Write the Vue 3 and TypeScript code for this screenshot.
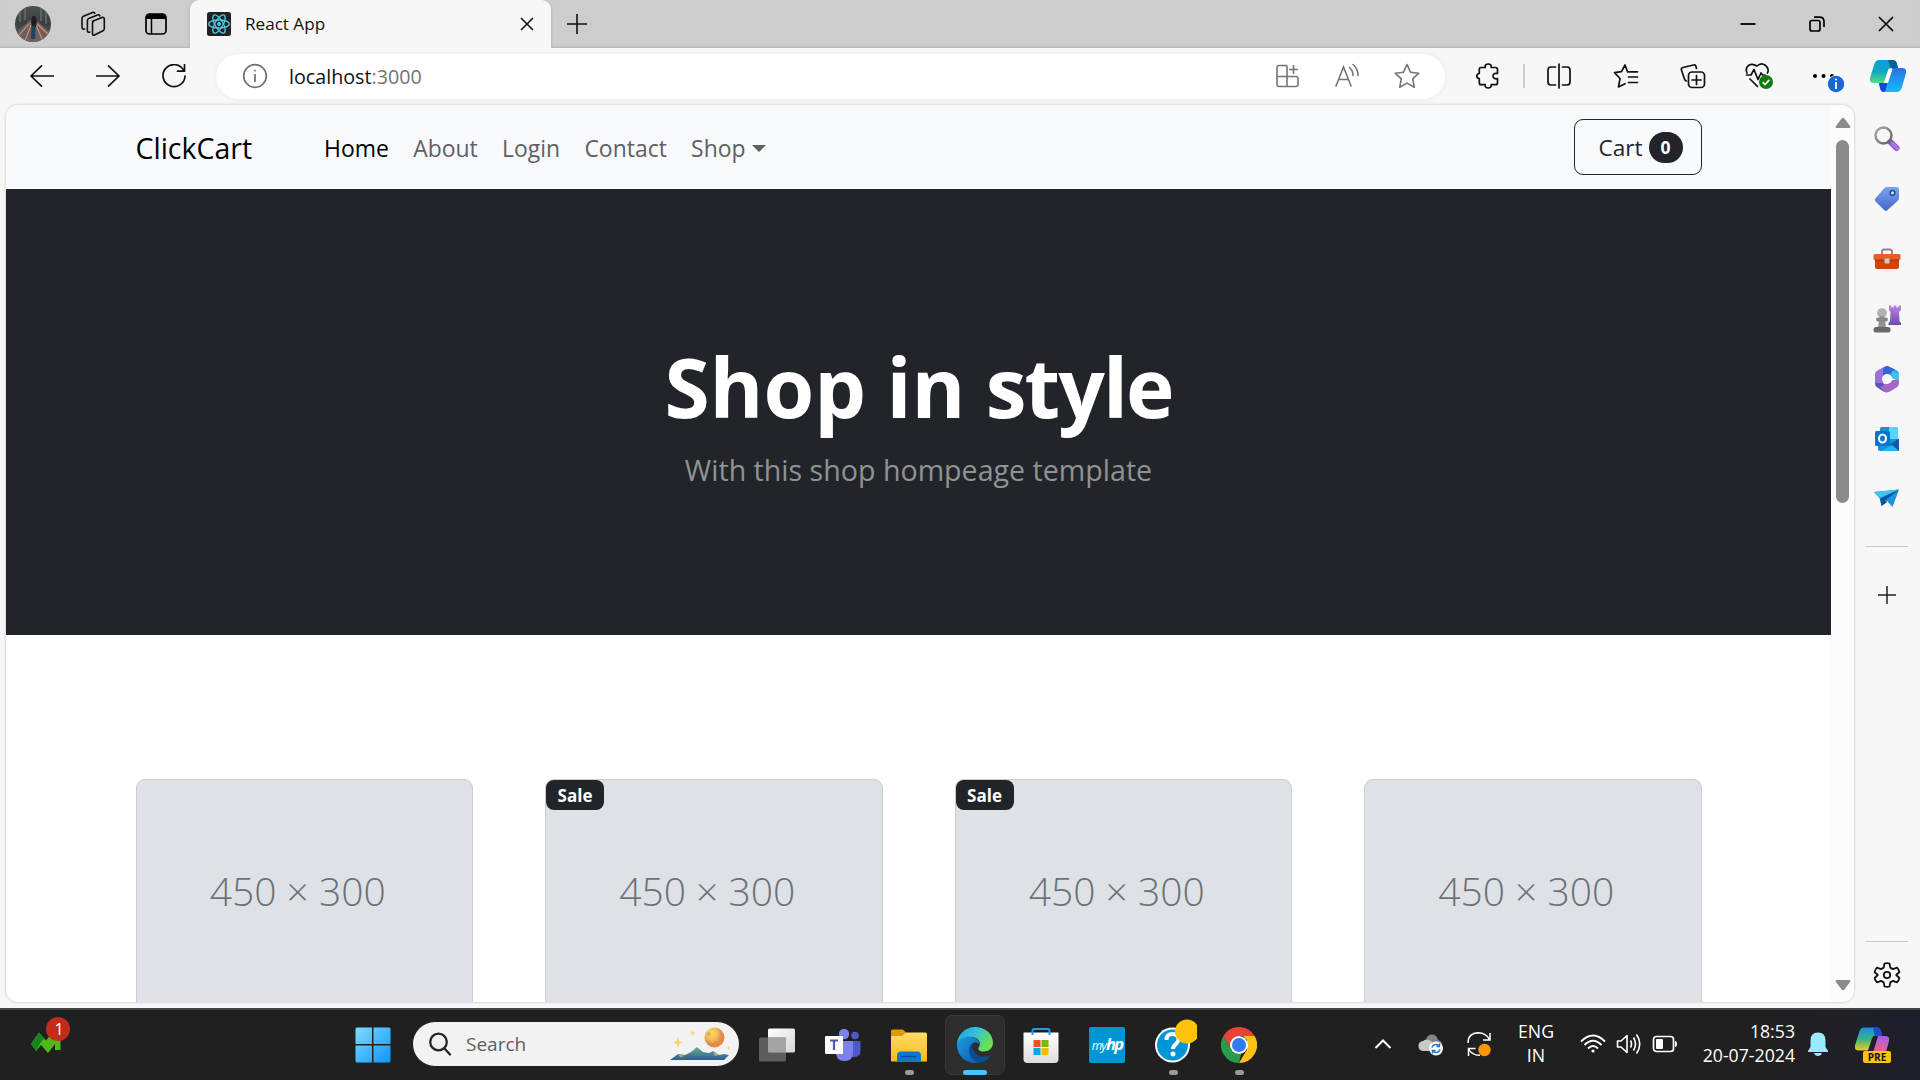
<script setup lang="ts">
interface Product {
  id: number
  sale: boolean
}

const links: string[] = ['Home', 'About', 'Login', 'Contact']
const products: Product[] = [
  { id: 1, sale: false },
  { id: 2, sale: true },
  { id: 3, sale: true },
  { id: 4, sale: false },
]
</script>

<template>
  <div class="screen">
    <header class="tabstrip">
      <svg class="avatar" width="36" height="36" viewBox="0 0 36 36">
        <defs>
          <clipPath id="avatarClip"><circle cx="18" cy="18" r="18" /></clipPath>
          <linearGradient id="forest" x1="0" y1="0" x2="0" y2="1">
            <stop offset="0" stop-color="#4c5152" /><stop offset=".5" stop-color="#3a3f40" /><stop offset="1" stop-color="#6d6562" />
          </linearGradient>
        </defs>
        <g clip-path="url(#avatarClip)">
          <rect width="36" height="36" fill="url(#forest)" />
          <path d="M5 0v16M10 0v14M26 0v15M31 0v18" stroke="#666b6c" stroke-width="1.5" />
          <path d="M15 14 0 28v8h36v-9L21 14z" fill="#6b605c" />
          <path d="M15 17 3 30M16 19 10 35M20 16l14 13M21 19l7 16" stroke="#d8907a" stroke-width="1.1" />
          <path d="M16 14l2-4h2l2 5-1 6h-4z" fill="#1d1e24" />
          <path d="M16.500 20h4l-.5 13h-4z" fill="#1c4260" />
        </g>
      </svg>
      <svg class="workspaces" width="26" height="26" viewBox="0 0 26 26" fill="none" stroke="#111" stroke-width="1.6" stroke-linejoin="round" stroke-linecap="round">
        <path d="M12.500 10.200 22 6.500q2.300-.6 2.300 1.500v9.500q0 1.500-1.300 2.200L14.500 24q-2 .8-2-1.500V12.400q0-1.600 1-2.200z" />
        <path d="M9.800 21q-2.400.8-2.400-1.600V9.800q0-1.700 1.400-2.400L17.500 4q2-.5 2.300 1" />
        <path d="M4.600 18q-2.600.5-2.600-1.700V7.600q0-1.700 1.400-2.300L12.500 1.500q2-.5 2.300.8" />
      </svg>
      <svg class="tabaction" width="22" height="22" viewBox="0 0 22 22">
        <rect x="1" y="1" width="20" height="20" rx="3.500" fill="none" stroke="#000" stroke-width="1.700" />
        <path d="M1 6V4q0-3 3-3h14q3 0 3 3v2z" /><path d="M6.500 6v15" stroke="#000" stroke-width="1.500" />
      </svg>
      <div class="tab">
        <svg width="24" height="24" viewBox="0 0 24 24">
          <rect width="24" height="24" rx="2.500" fill="#222" />
          <g fill="none" stroke="#4cc9ea" stroke-width="1.300">
            <ellipse cx="12" cy="12" rx="10.300" ry="4" />
            <ellipse cx="12" cy="12" rx="10.300" ry="4" transform="rotate(60 12 12)" />
            <ellipse cx="12" cy="12" rx="10.300" ry="4" transform="rotate(120 12 12)" />
          </g>
          <circle cx="12" cy="12" r="2" fill="#4cc9ea" />
        </svg>
        <span class="tab-title">React App</span>
        <svg width="14" height="14" viewBox="0 0 14 14"><path d="M1 1l12 12M13 1 1 13" stroke="#111" stroke-width="1.600" /></svg>
      </div>
      <svg class="newtab" width="22" height="22" viewBox="0 0 22 22"><path d="M11 1v20M1 11h20" stroke="#111" stroke-width="1.600" /></svg>
      <div class="window-controls">
        <svg width="16" height="16" viewBox="0 0 16 16"><path d="M.5 8h15" stroke="#000" stroke-width="1.800" /></svg>
        <svg width="16" height="16" viewBox="0 0 16 16" fill="none" stroke="#000" stroke-width="1.700">
          <rect x="1" y="4.500" width="10" height="10.500" rx="2" /><path d="M5 1.200h5.500q4.500 0 4.500 4.500V11" />
        </svg>
        <svg width="16" height="16" viewBox="0 0 16 16"><path d="M1 1l14 14M15 1 1 15" stroke="#000" stroke-width="1.700" /></svg>
      </div>
    </header>

    <div class="toolbar">
      <div class="history">
        <svg width="24" height="24" viewBox="0 0 24 24" class="line"><path d="M24 12H1M11.500 1.800 1 12l10.500 10.200" /></svg>
        <svg width="24" height="24" viewBox="0 0 24 24" class="line"><path d="M0 12h23M12.500 1.800 23 12 12.500 22.200" /></svg>
        <svg width="24" height="24" viewBox="0 0 24 24" class="line"><path d="M22 7A11 11 0 1 0 23 12M22.500.5V7.200H15.500" /></svg>
      </div>
      <div class="address">
        <svg width="26" height="26" viewBox="0 0 26 26" fill="none" stroke="#707070" stroke-width="1.700">
          <circle cx="13" cy="13" r="11.300" /><path d="M13 11v8" /><circle cx="13" cy="7.600" r=".6" fill="#707070" stroke-width="1" />
        </svg>
        <span class="url">localhost<i>:3000</i></span>
        <div class="address-actions">
          <svg width="26" height="26" viewBox="0 0 26 26" fill="none" stroke="#757575" stroke-width="1.600">
            <path d="M13 2.500H5Q3 2.500 3 4.500v17q0 2 2 2h17q2 0 2-2v-6q0-2-2-2H3M13 2.500v21M19.500 2v9M15 6.500h9" />
          </svg>
          <svg width="26" height="26" viewBox="0 0 26 26" fill="none" stroke="#757575" stroke-width="1.600" stroke-linecap="round">
            <path d="M2 23 9.500 4 17 23M4.700 16.500h9.600M15.500 4.500q3.500 3 3.500 8M19 1.500q5 4 5 11" />
          </svg>
          <svg width="26" height="26" viewBox="0 0 26 26" fill="none" stroke="#757575" stroke-width="1.600" stroke-linejoin="round">
            <path d="M13 1.500l3.500 7.700 8.300 1-6.100 5.700 1.600 8.300L13 20.100l-7.300 4.100 1.600-8.300-6.100-5.700 8.300-1z" />
          </svg>
        </div>
      </div>
      <svg class="puzzle line" width="24" height="26" viewBox="0 0 24 26">
        <path d="M5 4.500h4.200q-.4-3.500 3-3.500t3 3.500h4.300q2 0 2 2v4q-4.500-.8-4.500 2.500t4.500 2.700v4q0 2-2 2h-4.300q.3 3.300-3 3.300t-3-3.300H5q-1.700 0-1.700-2v-4Q.8 15.300.8 13t2.500-2.700V6.500q0-2 1.700-2z" />
      </svg>
      <span class="tool-divider"></span>
      <div class="tools">
        <div class="tool">
          <svg class="line" width="26" height="26" viewBox="0 0 26 26"><path d="M13 1v24M9.500 4H5Q2 4 2 7v12q0 3 3 3h4.500M16.500 4H21q3 0 3 3v12q0 3-3 3h-4.500" /></svg>
        </div>
        <div class="tool">
          <svg class="line" width="26" height="26" viewBox="0 0 26 26"><path d="M17 8.800h-2.500L12 2 8.500 8.700l-7 1L7 15.500 5.500 24l6.500-3.300M17 8.800h7.500M15.500 14h9M15.500 19.500h9" /></svg>
        </div>
        <div class="tool">
          <svg class="line" width="26" height="26" viewBox="0 0 26 26">
            <rect x="8.500" y="9" width="16" height="15.500" rx="3.500" /><path d="M16.500 12.500v9M12 17h9M16.500 5.500 16 3.500q-.5-2-2.500-1.500L3 4.500Q.8 5 1.500 7.300L4.500 16q.7 2 2 2" />
          </svg>
        </div>
        <div class="tool">
          <svg width="30" height="28" viewBox="0 0 30 28">
            <path class="line" d="M3 11Q1 6 4.500 3.500T13 4q4-4 8.300-.8T23.500 11M2.500 13H7l3-5.500 4 10L17 11l1.500 2H21M6 17l7.500 7.500" />
            <circle cx="22" cy="20" r="7" fill="#107c10" /><path d="M18.700 20.200l2.300 2.300 4.300-4.600" fill="none" stroke="#fff" stroke-width="1.700" />
          </svg>
        </div>
        <div class="tool">
          <svg width="36" height="34" viewBox="0 0 36 34">
            <circle cx="7" cy="17" r="2" /><circle cx="15.500" cy="17" r="2" /><circle cx="24" cy="17" r="2" />
            <circle cx="28" cy="25" r="9" fill="#f7f7f7" /><circle cx="28" cy="25" r="8.200" fill="#1a66d6" />
            <path d="M28 23v7" stroke="#fff" stroke-width="1.800" /><circle cx="28" cy="20.500" r="1.100" fill="#fff" />
          </svg>
        </div>
        <div class="tool last">
          <svg width="36" height="32" viewBox="0 0 36 32">
            <defs>
              <linearGradient id="cpA" x1="0" y1="0" x2="0" y2="1"><stop offset="0" stop-color="#0a9de5" /><stop offset=".5" stop-color="#10a7c0" /><stop offset="1" stop-color="#4fe08a" /></linearGradient>
              <linearGradient id="cpB" x1="0" y1="0" x2="0" y2="1"><stop offset="0" stop-color="#2a70dc" /><stop offset="1" stop-color="#15bcff" /></linearGradient>
            </defs>
            <path d="M9 0h14q3 0 4 4l1 4h-7q-2 0-3 3l-4 12H4q-5 0-4-5L4 5Q5.500 0 9 0z" fill="url(#cpA)" />
            <path d="M18 0h5q3 0 4 4l1 4h-6q-1.500 0-2-2z" fill="#075f92" />
            <path d="M9 23h5q2 0 3-3l5-12h10q5 0 4 5l-4 14q-1.500 5-5 5H14q-3.500 0-4-4z" fill="url(#cpB)" />
            <path d="M9 23h6q2 0 3-2l-2 8q-.5 3-2 3-3 0-4-4z" fill="#1746d1" />
            <path d="M18.500 9h4l-4.500 14h-4z" fill="#fff" />
          </svg>
        </div>
      </div>
    </div>

    <main class="middle">
      <section class="page">
        <div class="document">
          <nav class="navbar">
            <span class="brand">ClickCart</span>
            <div class="links">
              <span v-for="l in links" :key="l" :class="['link', l.toLowerCase()]">{{ l }}</span>
              <span class="link shop">Shop<b class="caret"></b></span>
            </div>
            <button class="cart">Cart<span class="count">0</span></button>
          </nav>
          <div class="hero">
            <h1>Shop in <span class="tight">style</span></h1>
            <p>With this shop hompeage template</p>
          </div>
          <div class="products">
            <article v-for="p in products" :key="p.id" class="card">
              <span v-if="p.sale" class="sale">Sale</span>
              <span class="placeholder">450 × 300</span>
            </article>
          </div>
        </div>
        <div class="scrollbar">
          <svg width="16" height="12" viewBox="0 0 16 12"><path d="M6.600 1.500q1.400-1.500 2.800 0l5.800 7.700q.8 1.800-1 1.800H1.800q-1.800 0-1-1.800z" fill="#8b8b8b" /></svg>
          <div class="thumb"></div>
          <svg class="down" width="16" height="12" viewBox="0 0 16 12"><path d="M6.600 10.500q1.400 1.500 2.800 0l5.800-7.700q.8-1.800-1-1.800H1.800Q0 1 .8 2.800z" fill="#8b8b8b" /></svg>
        </div>
      </section>

      <aside class="sidebar">
        <div class="apps">
          <svg width="28" height="28" viewBox="0 0 28 28">
            <defs><linearGradient id="lens" x1="0" y1="0" x2="1" y2="1"><stop offset="0" stop-color="#aaa" /><stop offset="1" stop-color="#5f5f5f" /></linearGradient></defs>
            <path d="M18 17.500 23.500 23" stroke="#9055c9" stroke-width="6" stroke-linecap="round" /><path d="M15 15l3.500 3.500" stroke="#777" stroke-width="2" />
            <circle cx="10.500" cy="10.500" r="8" fill="none" stroke="url(#lens)" stroke-width="2.400" />
            <path d="M19.500 18.500 24.500 23.500" stroke="#ab74df" stroke-width="3.500" stroke-linecap="round" />
          </svg>
          <svg width="28" height="28" viewBox="0 0 28 28">
            <defs><linearGradient id="tag" x1="0" y1="0" x2="0" y2="1"><stop offset="0" stop-color="#7ba3f3" /><stop offset="1" stop-color="#4169c9" /></linearGradient></defs>
            <path d="M14 2h9q3 0 3 3v8q0 1.500-1.200 2.700L14.500 25q-1.700 1.700-3.400 0L2.500 16.500q-1.600-1.600 0-3.300L11.500 3Q12.500 2 14 2z" fill="url(#tag)" />
            <circle cx="19.500" cy="8" r="2.300" fill="#d9e5ff" stroke="#2e4f9f" stroke-width="1.700" />
          </svg>
          <svg width="28" height="28" viewBox="0 0 28 28">
            <path d="M9 9V6.500Q9 4.500 11 4.500h6q2 0 2 2V9" fill="none" stroke="#858585" stroke-width="1.800" />
            <rect x="2" y="12" width="24" height="12" rx="2" fill="#d3410d" /><rect x=".5" y="9" width="27" height="6" rx="1.500" fill="#e65f24" />
            <path d="M2 15h24" stroke="#a52a05" stroke-width=".8" /><rect x="11.500" y="13.500" width="5" height="5" rx="1" fill="#ccc" />
          </svg>
          <svg width="28" height="28" viewBox="0 0 28 28">
            <defs><linearGradient id="rook" x1="0" y1="0" x2="0" y2="1"><stop offset="0" stop-color="#bc83ea" /><stop offset="1" stop-color="#6f4da7" /></linearGradient></defs>
            <path d="M16 .5h2.500v2h2v-2h3v2h2v-2H28V5l-2 2 .5 9 1.500 2v2H15.500v-2L17 16l.5-9L16 5z" fill="url(#rook)" />
            <circle cx="9" cy="8" r="4.800" fill="#b0b0b0" /><path d="M7 11h4v4h1l1 8H5l1-8h1z" fill="#929292" /><rect x="3" y="12.500" width="12" height="4" rx="2" fill="#868686" /><rect x=".5" y="22" width="17" height="5.500" rx="2.500" fill="#686868" />
          </svg>
          <svg width="28" height="28" viewBox="0 0 28 28">
            <path d="M14 .8l9 4.200q3 1.500 3 4.500v8l-6-5-5-3.500L7 8z" fill="#39a5ef" /><path d="M14 .8l8 3.700-6 5-6 3.500-2-5 2-5.500z" fill="#3467d5" />
            <path d="M10 2.500 4 5.800Q2 7 2 9.500V18l4 3 4-3V9z" fill="#9b72dd" /><path d="M2 18l8 0 6 5-2 4.500q-1.500 0-3-.8L4 22.300Q2 21 2 18z" fill="#5a55b8" />
            <path d="M26 15v3q0 3-2.500 4.500L17 26.500q-3 1.500-6 0L7 22l13-7z" fill="#a467c5" /><path d="M19 13l7 3V9l-7-3z" fill="#3bc2f1" /><circle cx="14" cy="14" r="5" fill="#f7f7f7" />
          </svg>
          <svg width="28" height="28" viewBox="0 0 28 28">
            <rect x="7" y="2" width="18" height="20" rx="1.500" fill="#1b8ee0" /><path d="M16 2h9v12h-9z" fill="#50d9ff" /><path d="M8 7h8v7H8z" fill="#0a5aa8" />
            <path d="M5 17h21v9H7q-2 0-2-2z" fill="#1391e5" /><path d="M26 13.500 16 20l10 6z" fill="#1059a3" /><path d="M8 26l11-6 7 6z" fill="#24b2ef" />
            <rect x="2" y="6" width="15" height="15" rx="1.500" fill="#0675cc" /><ellipse cx="9.500" cy="13.500" rx="3.500" ry="4" fill="none" stroke="#fff" stroke-width="2.100" />
          </svg>
          <svg width="28" height="28" viewBox="0 0 28 28">
            <path d="M1 7 26 4.500 19.500 22 14 16l-5.500 5L7 14z" fill="#1b94df" /><path d="M1 7 26 4.500 7 13z" fill="#3fc4f0" /><path d="M7 13.500 26 4.500 11.500 16l-3 5z" fill="#0a569f" /><path d="M8.500 21l3-5 2.500 1z" fill="#083a70" />
          </svg>
        </div>
        <hr />
        <svg class="add" width="20" height="20" viewBox="0 0 20 20"><path d="M10 1v18M1 10h18" stroke="#222" stroke-width="1.500" /></svg>
        <hr class="bottom-rule" />
        <svg class="gear line" width="28" height="28" viewBox="0 0 28 28">
          <circle cx="14" cy="14" r="3.200" />
          <path d="M11.500 2.500q2.500-.8 5 0l.8 4.100 2.700 1.500 4-1.400q1.800 1.900 2.400 4.300L23.200 14l3.200 3q-.6 2.500-2.400 4.300l-4-1.400-2.700 1.500-.8 4.100q-2.500.8-5 0l-.8-4.100L8 19.900l-4 1.400Q2.200 19.500 1.600 17l3.200-3-3.200-3Q2.200 8.600 4 6.700l4 1.400 2.700-1.500z" />
        </svg>
      </aside>
    </main>

    <footer class="taskbar">
      <div class="widget">
        <svg width="36" height="36" viewBox="0 0 36 36">
          <path d="M0 27 8 15.500l7 8 8-10h6.500V33H24v-6l-7 9-7-8-5 6z" fill="#4fb81a" /><path d="M0 27 8 15.500l5 6-4 5-4 7.500z" fill="#15851d" />
          <circle cx="27" cy="12" r="12" fill="#c42b1c" />
        </svg>
        <span class="alert">1</span>
      </div>
      <div class="launchers">
        <svg class="start" width="36" height="36" viewBox="0 0 36 36">
          <defs><linearGradient id="win" x1="0" y1="0" x2="1" y2="1"><stop offset="0" stop-color="#7fdcff" /><stop offset="1" stop-color="#0b94ff" /></linearGradient></defs>
          <path d="M2 .5h15v16.500H.5V2Q.5.500 2 .500zM18.500.5H34q1.500 0 1.500 1.500v15h-17zM.5 18.500H17v17H2Q.5 35.500.5 34zM18.500 18.500h17V34q0 1.500-1.500 1.500H18.500z" fill="url(#win)" />
        </svg>
        <div class="search">
          <svg width="24" height="24" viewBox="0 0 24 24" fill="none" stroke="#262626" stroke-width="2.300" stroke-linecap="round"><circle cx="10.500" cy="10" r="8.300" /><path d="M16.500 16.500l5.500 6" /></svg>
          <span>Search</span>
          <svg class="scene" width="64" height="36" viewBox="0 0 64 36">
            <defs>
              <radialGradient id="moon" cx=".35" cy=".3"><stop offset="0" stop-color="#fbd968" /><stop offset=".6" stop-color="#f3bd58" /><stop offset="1" stop-color="#e58a4c" /></radialGradient>
              <linearGradient id="hill" x1="0" y1="0" x2="0" y2="1"><stop offset="0" stop-color="#6fae86" /><stop offset="1" stop-color="#285d9b" /></linearGradient>
            </defs>
            <circle cx="44.500" cy="11.500" r="10" fill="url(#moon)" /><g fill="#e8b14b"><circle cx="39" cy="8" r="2" /><circle cx="47" cy="14" r="1.600" /><circle cx="42" cy="16" r="1.200" /></g>
            <path d="M0 34l8-6 7 1 6-3 6-5 6 5 6 1 4-2 6 4 5-1 5 1-5 5z" fill="url(#hill)" /><path d="M8 28.500l6 1-3 2zM43 26l6 3-4 1z" fill="#cfa368" />
            <path d="M8 11l1.300 4.200 4.200 1.300-4.200 1.300L8 22l-1.300-4.200-4.200-1.300 4.200-1.300zM22.500 4l.8 2.200 2.200.8-2.200.8-.8 2.200-.8-2.200-2.200-.8 2.200-.8zM58.500 20l.6 1.400 1.400.6-1.400.6-.6 1.400-.6-1.400-1.400-.6 1.400-.6z" fill="#ffd265" />
          </svg>
        </div>
        <div class="app">
          <svg width="36" height="36" viewBox="0 0 36 36">
            <defs><linearGradient id="tv" x1="0" y1="0" x2="1" y2="1"><stop offset="0" stop-color="#fff" /><stop offset="1" stop-color="#d5d5d5" /></linearGradient></defs>
            <rect x="9" y="1.500" width="27" height="24" rx="1.500" fill="url(#tv)" /><rect y="10.500" width="27" height="24" rx="1.500" fill="#686868" fill-opacity=".85" /><path d="M9 10.500h18v15H10q-1 0-1-1z" fill="#a4a4a4" />
          </svg>
        </div>
        <div class="app">
          <svg width="36" height="36" viewBox="0 0 36 36">
            <circle cx="30" cy="8.500" r="3.800" fill="#5059c9" /><path d="M27 14h8.500v10q0 6-7 6H26z" fill="#5059c9" /><circle cx="19" cy="7" r="5.200" fill="#7b83eb" />
            <path d="M11 14h17v11.500q0 8.500-8.500 8.500T11 25.500z" fill="#7b83eb" /><rect y="9" width="18" height="18" rx="1" fill="#fff" /><path d="M5 13.500h8M9 13.500v9.500" stroke="#4b53bc" stroke-width="2.200" />
          </svg>
        </div>
        <div class="app">
          <svg width="36" height="36" viewBox="0 0 36 36">
            <defs><linearGradient id="fold" x1="0" y1="0" x2="0" y2="1"><stop offset="0" stop-color="#ffdc6c" /><stop offset="1" stop-color="#fbb917" /></linearGradient></defs>
            <path d="M0 11V4q0-1.500 1.500-1.500H11q1 0 2 1l2 2-3 4z" fill="#dc9b05" /><path d="M0 9h11l4-3.500h19.500q1.500 0 1.500 1.500v27.500H0z" fill="url(#fold)" />
            <path d="M6 34.500v-6q0-4 4-4h16q4 0 4 4v6z" fill="#0b78cf" /><path d="M10.500 29.500h14" stroke="#034b8f" stroke-width="1.500" stroke-linecap="round" />
          </svg>
          <i class="running"></i>
        </div>
        <div class="app active">
          <svg width="36" height="36" viewBox="0 0 36 36">
            <defs>
              <linearGradient id="edgeTop" x1="0" y1="0" x2="1" y2=".5"><stop offset="0" stop-color="#1c9de0" /><stop offset=".5" stop-color="#33c3d9" /><stop offset="1" stop-color="#6be24b" /></linearGradient>
              <linearGradient id="edgeLow" x1="0" y1="0" x2="1" y2="1"><stop offset="0" stop-color="#1ba0e2" /><stop offset="1" stop-color="#0d56a7" /></linearGradient>
            </defs>
            <path d="M0 18C0 8 8 0 18 0s18 7 18 15.500c0 6-4.500 9-9.500 9-5 0-6-2.500-4.500-4.500 3-4.500-1-10-7.500-10C7 10 2 14 0 18z" fill="url(#edgeTop)" />
            <path d="M0 18C1 12 6 9.500 12 9.500c6 0 11 4 10.500 8.500-1-3-5-4-7.500-1-3 4 0 14 8 19-3 .5-6 .5-10-.7C5 33 0 26 0 18z" fill="url(#edgeLow)" />
            <path d="M15 17c-5 3-4 17 8 19 5-1 9-4 11-8.500-4 3-11 3.200-15-.8-3-3-4-6-4-9.700z" fill="#0d4b91" />
          </svg>
          <i class="running"></i>
        </div>
        <div class="app">
          <svg width="36" height="36" viewBox="0 0 36 36">
            <defs><linearGradient id="bag" x1="0" y1="0" x2="0" y2="1"><stop offset="0" stop-color="#fff" /><stop offset="1" stop-color="#dcdcdc" /></linearGradient></defs>
            <path d="M.5 5.500h35V32q0 4-4 4h-27q-4 0-4-4z" fill="url(#bag)" /><path d="M9.500 8V3.500Q9.500 2 11 2h14q1.500 0 1.500 1.500V8" fill="none" stroke="#1aa0e8" stroke-width="2" />
            <path d="M10.500 13h7v7h-7z" fill="#f25022" /><path d="M18.500 13h7v7h-7z" fill="#7fba00" /><path d="M10.500 21h7v7h-7z" fill="#00a4ef" /><path d="M18.500 21h7v7h-7z" fill="#ffb900" />
          </svg>
        </div>
        <div class="app"><span class="myhp"><small>my</small>hp</span></div>
        <div class="app">
          <svg class="tall" width="42" height="46" viewBox="0 0 42 46">
            <circle cx="17.500" cy="28" r="17.500" fill="#fff" /><circle cx="17.500" cy="28" r="15.500" fill="#0096d6" />
            <path d="M11.500 23q0-6 6-6t6 5.500c0 4-5.500 4.500-5.500 9.500" fill="none" stroke="#fff" stroke-width="4" /><circle cx="18" cy="37" r="2.500" fill="#fff" /><circle cx="32" cy="14.500" r="12" fill="#ffc20e" />
          </svg>
          <i class="running"></i>
        </div>
        <div class="app">
          <svg width="36" height="36" viewBox="0 0 36 36">
            <path d="M18 9h15.600A18 18 0 0 0 2.400 9l7.800 13.500L12 14z" fill="#e94335" /><path d="M2.400 9l7.800 13.500 6 4.500h4L18 36A18 18 0 0 1 2.400 9z" fill="#2a9b4b" /><path d="M18 36l8-13.500L26 13l-4-4h11.600A18 18 0 0 1 18 36z" fill="#fbc116" />
            <circle cx="18" cy="18" r="9" fill="#fff" /><circle cx="18" cy="18" r="7" fill="#2f7bf0" />
          </svg>
          <i class="running"></i>
        </div>
      </div>
      <div class="tray">
        <svg width="18" height="12" viewBox="0 0 18 12"><path d="M1.500 10 9 2.500 16.500 10" fill="none" stroke="#fff" stroke-width="2" /></svg>
        <svg class="cloud" width="26" height="24" viewBox="0 0 26 24">
          <path d="M8 7Q10 2 14.500 2.500T20 8q4 1 4 5t-5 5z" fill="#858585" /><path d="M5 19q-4.500-.5-4.500-5T5 9q2-2.500 6-1t4 5l4 1v5z" fill="#c9c9c9" />
          <circle cx="18" cy="16.500" r="7" fill="#fff" /><path d="M14 15.500a4 4 0 0 1 7-1.500M22 17.500a4 4 0 0 1-7 1.500M21.500 11.500v3h-3M14.500 21.500v-3h3" fill="none" stroke="#1878ce" stroke-width="1.500" />
        </svg>
        <svg class="update" width="26" height="26" viewBox="0 0 26 26">
          <path d="M2 12Q2 2 12.500 1.800 20 2 23.500 8.500M24 2v7h-7M2.500 25v-7.500h7M2.500 18Q6 24.500 14 24.200" fill="none" stroke="#fff" stroke-width="1.500" /><circle cx="18.500" cy="19" r="6.200" fill="#ff9800" />
        </svg>
        <div class="language"><span>ENG</span><span>IN</span></div>
        <svg class="wifi" width="26" height="20" viewBox="0 0 26 20" fill="none" stroke="#fff" stroke-width="1.800">
          <path d="M1 7.500q12-12 24 0M4.500 11q8.500-8.500 17 0M8 14.500q5-5 10 0" /><circle cx="13" cy="17" r="1.600" fill="#fff" stroke="none" />
        </svg>
        <svg class="sound" width="26" height="24" viewBox="0 0 26 24" fill="none" stroke="#fff" stroke-width="1.600" stroke-linejoin="round">
          <path d="M1.500 9h3.500l6-5.500v17L5 15H1.500zM14.500 8.500q2 3.500 0 7M17.500 5.500q4 6.500 0 13M20.500 2.500q6.500 9.500 0 19" />
        </svg>
        <svg class="battery" width="26" height="20" viewBox="0 0 26 20"><rect x="1.500" y="2.500" width="20" height="15" rx="3" fill="none" stroke="#fff" stroke-width="1.700" /><rect x="4" y="5" width="7" height="10" rx="1" fill="#fff" /><path d="M23 7q2 0 2 3t-2 3z" fill="#fff" /></svg>
        <div class="clock"><span class="time">18:53</span><span>20-07-2024</span></div>
        <svg class="bell" width="22" height="26" viewBox="0 0 22 26"><path d="M11 1.500q7.500 0 7.500 8V16l2.500 4v1H1v-1l2.500-4V9.500q0-8 7.500-8zM7 22h8q-1 3-4 3t-4-3z" fill="#99ebff" /></svg>
        <div class="copilot">
          <svg width="36" height="34" viewBox="0 0 36 34">
            <defs>
              <linearGradient id="pcA" x1="0" y1="0" x2="0" y2="1"><stop offset="0" stop-color="#1e8bea" /><stop offset=".5" stop-color="#39b380" /><stop offset="1" stop-color="#f0cb20" /></linearGradient>
              <linearGradient id="pcB" x1="0" y1="0" x2="0" y2="1"><stop offset="0" stop-color="#a35bee" /><stop offset="1" stop-color="#f5647c" /></linearGradient>
            </defs>
            <path d="M9 .5h13q3 0 4 4l1 4h-7q-2 0-3 3l-4 12H4q-5 0-4-5L4 5.500Q5.500.5 9 .500z" fill="url(#pcA)" /><path d="M18 .5h4q3 0 4 4l1 4h-6q-1.500 0-2-2z" fill="#1950c8" /><path d="M21 9h9q5 0 4 5l-3 11H15z" fill="url(#pcB)" /><path d="M19 9h4l-4.500 15h-4z" fill="#20202a" />
          </svg>
          <span class="pre">PRE</span>
        </div>
      </div>
    </footer>
  </div>
</template>

<style>
body { margin: 0; overflow: hidden; }
</style>

<style scoped>
* { box-sizing: border-box; }
svg { display: block; flex: none; }
.screen { width: 1920px; height: 1080px; display: flex; flex-direction: column; background: #f7f7f7; font-family: "Open Sans", "Noto Sans", sans-serif; overflow: hidden; white-space: nowrap; }
.line { fill: none; stroke: #111; stroke-width: 1.7; stroke-linejoin: round; stroke-linecap: round; }

.tabstrip { height: 48px; flex: none; display: flex; align-items: center; background: #cdcdcd; padding-left: 15px; box-shadow: inset 0 -2px 2px -1px #b2b2b2; }
.workspaces { margin-left: 29px; }
.tabaction { margin-left: 39px; }
.tab { width: 361px; height: 48px; margin-left: 23px; padding: 0 17px; display: flex; align-items: center; background: #f7f7f7; border-radius: 9px 9px 0 0; box-shadow: 0 0 3px #aaa; clip-path: inset(0 -3px 0 -3px); }
.tab-title { flex: 1; margin-left: 14px; padding-bottom: 1px; font-size: 17.1px; color: #111; }
.newtab { margin-left: 15px; }
.window-controls { margin-left: auto; display: flex; gap: 53px; padding-right: 26.5px; }

.toolbar { height: 57px; flex: none; display: flex; align-items: center; padding: 0 0 1px 30px; }
.history { display: flex; gap: 42px; }
.address { width: 1229px; height: 45px; margin-left: 30px; display: flex; align-items: center; background: #fff; border-radius: 23px; padding: 0 25px 0 26px; box-shadow: 0 0 5px #e9e9e9; }
.url { margin-left: 21px; font-size: 19.7px; color: #111; }
.url i { font-style: normal; color: #757575; }
.address-actions { margin-left: auto; display: flex; gap: 34px; }
.puzzle { margin-left: 31px; }
.tool-divider { width: 2px; height: 24px; margin-left: 23px; background: #ccc; }
.tools { display: flex; margin-left: 1px; }
.tool { width: 66.7px; display: flex; justify-content: center; align-items: center; }
.tool.last { width: 57px; }

.middle { height: 903px; flex: none; display: flex; }
.page { width: 1848px; height: 897px; margin-left: 6px; display: flex; border-radius: 12px; background: #fff; overflow: hidden; box-shadow: 0 0 3px #bbb; }
.document { width: 1825px; overflow: hidden; }
.navbar { height: 84px; display: flex; align-items: center; background: #f8f9fc; padding: 0 129px 0 129.5px; }
.brand { font-size: 28.5px; color: #000; width: 188.5px; padding-top: 2px; }
.links { display: flex; gap: 24.3px; flex: 1; padding-top: 2px; font-size: 22.95px; color: #5f6062; }
.home { color: #000; }
.shop { display: flex; align-items: center; }
.caret { margin-left: 6px; border: 7px solid transparent; border-top-color: #5f6062; border-bottom: 0; }
.cart { width: 128px; height: 56px; display: flex; align-items: center; justify-content: center; gap: 6px; border: 1.5px solid #212529; border-radius: 9px; background: transparent; font: 22.6px "Open Sans", sans-serif; color: #212529; padding: 1px 0 0 5px; }
.count { width: 34px; height: 31px; line-height: 31px; border-radius: 16px; background: #212529; color: #fff; font-size: 17.5px; font-weight: 700; text-align: center; }
.hero { height: 446px; background: #212529; text-align: center; padding-top: 147px; }
h1 { margin: 0; font-size: 82px; line-height: 101px; font-weight: 700; color: #fff; word-spacing: -1px; }
.tight { letter-spacing: -1.9px; }
p { margin: 10px 0 0; font-size: 28.6px; line-height: 45px; color: #909294; }
.products { display: flex; gap: 72px; padding: 144px 129.5px 0; }
.card { flex: 1; height: 300px; border: 1px solid #cbced1; border-radius: 9px; background: #dee2e6; position: relative; display: flex; flex-direction: column; align-items: center; }
.placeholder { margin: 82px 13px 0 0; font-size: 39px; line-height: 58px; font-weight: 300; color: #6c7278; }
.sale { position: absolute; left: 0; top: 0; width: 58px; height: 30px; line-height: 31px; text-align: center; border-radius: 8px; background: #212529; color: #fff; font-weight: 700; font-size: 17px; }
.scrollbar { width: 23px; background: #fcfcfc; display: flex; flex-direction: column; align-items: center; padding: 12px 0 11px; }
.thumb { width: 13px; height: 363px; margin-top: 11px; border-radius: 7px; background: #8b8b8b; }
.down { margin-top: auto; }

.sidebar { width: 66px; display: flex; flex-direction: column; align-items: center; padding-top: 19.5px; }
.apps { display: flex; flex-direction: column; gap: 32.1px; }
hr { width: 42px; height: 0; margin: 33px 0 0; border: 0; border-top: 1.5px solid #c8c8c8; }
.add { margin: 38px 1px 0 0; }
.bottom-rule { margin-top: 336px; }
.gear { margin-top: 19px; stroke-width: 1.8; }

.taskbar { height: 72px; flex: none; display: flex; background: linear-gradient(90deg, #202020 1750px, #1f1f2b); border-top: 2px solid #444; color: #fff; }
.widget { width: 36px; height: 48px; margin: 7px 0 0 31px; position: relative; }
.widget svg { overflow: visible; }
.alert { position: absolute; left: 16px; top: 1px; width: 24px; line-height: 22px; text-align: center; font-size: 16px; }
.launchers { margin-left: 288px; display: flex; align-items: center; }
.start { margin-bottom: 1px; }
.search { width: 326px; height: 44px; margin: 0 5px 2px 22px; padding: 0 5px 0 15px; display: flex; align-items: center; background: #f2f2f2; border-radius: 22px; color: #5e5e5e; font-size: 19px; }
.search span { margin-left: 14px; }
.scene { margin-left: auto; }
.app { width: 60px; height: 60px; margin: 0 3px 1px; display: flex; align-items: center; justify-content: center; position: relative; border-radius: 7px; }
.app.active { background: #2d2d2d; border: 1px solid #393939; }
.running { position: absolute; left: 26px; bottom: 0; width: 9px; height: 5px; border-radius: 3px; background: #9a9a9a; }
.active .running { left: 17px; bottom: -1px; width: 24px; background: #4cc2ff; }
.tall { margin: -10px -6px 0 0; }
.myhp { width: 36px; height: 36px; border-radius: 2px; background: #0096d6; font: italic 700 16.5px/34px "Open Sans", sans-serif; text-align: center; letter-spacing: -1.8px; }
.myhp small { font-size: 12px; font-weight: 400; letter-spacing: -.8px; }
.tray { display: flex; align-items: center; margin-left: 102px; padding-bottom: 3px; font-size: 17.7px; line-height: 23.5px; }
.cloud { margin-left: 26px; }
.update { margin-left: 22px; }
.language { width: 40px; margin-left: 24px; display: flex; flex-direction: column; align-items: center; }
.wifi { margin-left: 24px; }
.sound { margin-left: 10px; }
.battery { margin-left: 10px; }
.clock { width: 94px; margin-left: 23px; display: flex; flex-direction: column; align-items: flex-end; }
.bell { margin-left: 12px; }
.copilot { margin-left: 26px; position: relative; }
.pre { position: absolute; left: 8px; top: 24px; width: 28px; height: 12px; line-height: 12px; border-radius: 2px; background: #ffc20e; color: #111; font-size: 10px; font-weight: 700; text-align: center; }
</style>
